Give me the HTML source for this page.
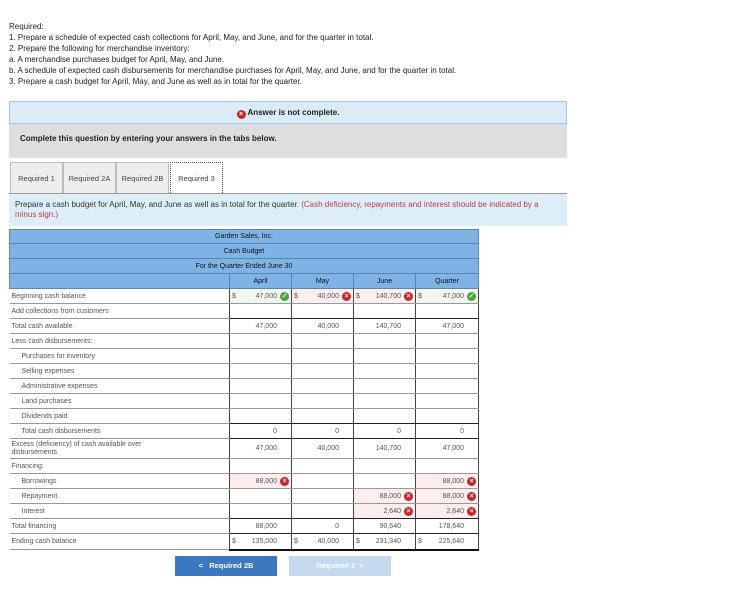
<!DOCTYPE html>
<html><head><meta charset="utf-8"><style>
*{margin:0;padding:0;box-sizing:border-box}
body{width:753px;height:607px;background:#fff;font-family:"Liberation Sans",Arial,sans-serif;color:#333;position:relative;overflow:hidden}
.a{position:absolute}
.req{left:9px;top:21px;font-size:8px;line-height:11px;color:#222}
.ban{left:9px;top:101px;width:558px;height:23px;background:#d9ebf7;border:1px solid #a9c8e2;font-size:8px;font-weight:bold;text-align:center;line-height:21px;color:#222}
.gray{left:9px;top:124px;width:558px;height:34px;background:#dedede;font-size:8px;font-weight:bold;line-height:30px;padding-left:11px;color:#222}
.tab{top:162px;height:31px;border:1px solid #bbb;border-bottom:none;background:#eee;font-size:7.5px;line-height:31px;text-align:center;color:#444}
.inst{left:9px;top:193px;width:558px;height:33px;background:#ddeef9;border-top:1px solid #999;font-size:8px;line-height:10px;padding:6px 16px 6px 6px;color:#333}
.inst span{color:#c03a4a}
table{position:absolute;left:9px;top:229px;border-collapse:collapse;font-size:7px;table-layout:fixed}
td{height:15px;border-bottom:1px solid #999;padding:0;white-space:nowrap;color:#555}
tr.h td{background:#7eb3e6;border:1px solid #5a86b5;text-align:center;color:#111;font-size:7px}
td.l{padding-left:2px}
td.i{padding-left:12px}
td.c{border-left:1px solid #444;text-align:right;padding-right:14px;position:relative}
td.c.q{border-right:1px solid #444}
tr.bt td.c{border-bottom:1.5px solid #222}
td.p{background:#fdeeee}
td.g{background:#f1f7ef}
.d{position:absolute;left:2px}
.x,.k{display:inline-block;width:9px;height:9px;border-radius:50%;color:#fff;font-size:7px;line-height:9px;text-align:center;font-weight:bold;position:absolute;right:2px;top:3px}
.x{background:#c8272b}.k{background:#4aa53d}
.btn{top:556px;height:20px;width:102px;font-size:7.5px;font-weight:bold;line-height:20px;text-align:center;color:#fff}
</style></head><body>
<div class="a req">Required:<br>1. Prepare a schedule of expected cash collections for April, May, and June, and for the quarter in total.<br>2. Prepare the following for merchandise inventory:<br>a. A merchandise purchases budget for April, May, and June.<br>b. A schedule of expected cash disbursements for merchandise purchases for April, May, and June, and for the quarter in total.<br>3. Prepare a cash budget for April, May, and June as well as in total for the quarter.</div>
<div class="a ban"><span style="display:inline-block;width:9px;height:9px;border-radius:50%;background:#c8272b;color:#fff;font-size:7px;line-height:9px;vertical-align:-1px">×</span> Answer is not complete.</div>
<div class="a gray">Complete this question by entering your answers in the tabs below.</div>
<div class="a tab" style="left:10px;width:53px">Required 1</div>
<div class="a tab" style="left:63px;width:53px">Required 2A</div>
<div class="a tab" style="left:116px;width:53px">Required 2B</div>
<div class="a tab" style="left:170px;width:53px;background:#fff;border:1px dotted #555;border-bottom:none">Required 3</div>
<div class="a inst">Prepare a cash budget for April, May, and June as well as in total for the quarter. <span>(Cash deficiency, repayments and interest should be indicated by a minus sign.)</span></div>
<table>
<colgroup><col style="width:220px"><col style="width:62px"><col style="width:62px"><col style="width:62px"><col style="width:63px"></colgroup>
<tr class="h"><td colspan="5" style="height:14px">Garden Sales, Inc.</td></tr>
<tr class="h"><td colspan="5">Cash Budget</td></tr>
<tr class="h"><td colspan="5">For the Quarter Ended June 30</td></tr>
<tr class="h"><td></td><td>April</td><td>May</td><td>June</td><td>Quarter</td></tr>
<tr><td class="l">Beginning cash balance</td><td class="c g"><span class="d">$</span>47,000<span class="k">✓</span></td><td class="c p"><span class="d">$</span>40,000<span class="x">×</span></td><td class="c p"><span class="d">$</span>140,700<span class="x">×</span></td><td class="c q g"><span class="d">$</span>47,000<span class="k">✓</span></td></tr>
<tr class="bt"><td class="l">Add collections from customers</td><td class="c"></td><td class="c"></td><td class="c"></td><td class="c q"></td></tr>
<tr><td class="l">Total cash available</td><td class="c">47,000</td><td class="c">40,000</td><td class="c">140,700</td><td class="c q">47,000</td></tr>
<tr><td class="l">Less cash disbursements:</td><td class="c"></td><td class="c"></td><td class="c"></td><td class="c q"></td></tr>
<tr><td class="i">Purchases for inventory</td><td class="c"></td><td class="c"></td><td class="c"></td><td class="c q"></td></tr>
<tr><td class="i">Selling expenses</td><td class="c"></td><td class="c"></td><td class="c"></td><td class="c q"></td></tr>
<tr><td class="i">Administrative expenses</td><td class="c"></td><td class="c"></td><td class="c"></td><td class="c q"></td></tr>
<tr><td class="i">Land purchases</td><td class="c"></td><td class="c"></td><td class="c"></td><td class="c q"></td></tr>
<tr class="bt"><td class="i">Dividends paid</td><td class="c"></td><td class="c"></td><td class="c"></td><td class="c q"></td></tr>
<tr class="bt"><td class="i">Total cash disbursements</td><td class="c">0</td><td class="c">0</td><td class="c">0</td><td class="c q">0</td></tr>
<tr><td class="l" style="height:20px;white-space:normal;line-height:8px">Excess (deficiency) of cash available over<br>disbursements</td><td class="c">47,000</td><td class="c">40,000</td><td class="c">140,700</td><td class="c q">47,000</td></tr>
<tr><td class="l">Financing:</td><td class="c"></td><td class="c"></td><td class="c"></td><td class="c q"></td></tr>
<tr><td class="i">Borrowings</td><td class="c p">88,000<span class="x">×</span></td><td class="c"></td><td class="c"></td><td class="c q p">88,000<span class="x">×</span></td></tr>
<tr><td class="i">Repayment</td><td class="c"></td><td class="c"></td><td class="c p">88,000<span class="x">×</span></td><td class="c q p">88,000<span class="x">×</span></td></tr>
<tr class="bt"><td class="i">Interest</td><td class="c"></td><td class="c"></td><td class="c p">2,640<span class="x">×</span></td><td class="c q p">2,640<span class="x">×</span></td></tr>
<tr class="bt"><td class="l">Total financing</td><td class="c">88,000</td><td class="c">0</td><td class="c">90,640</td><td class="c q">178,640</td></tr>
<tr><td class="l" style="height:16px">Ending cash balance</td><td class="c" style="border-bottom:2.5px solid #111"><span class="d">$</span>135,000</td><td class="c" style="border-bottom:2.5px solid #111"><span class="d">$</span>40,000</td><td class="c" style="border-bottom:2.5px solid #111"><span class="d">$</span>231,340</td><td class="c q" style="border-bottom:2.5px solid #111"><span class="d">$</span>225,640</td></tr>
</table>
<div class="a btn" style="left:175px;background:#3c78bf">&lt;&nbsp;&nbsp; Required 2B</div>
<div class="a btn" style="left:289px;background:#c5d9ee">Required 3 &nbsp;&gt;</div>
</body></html>
